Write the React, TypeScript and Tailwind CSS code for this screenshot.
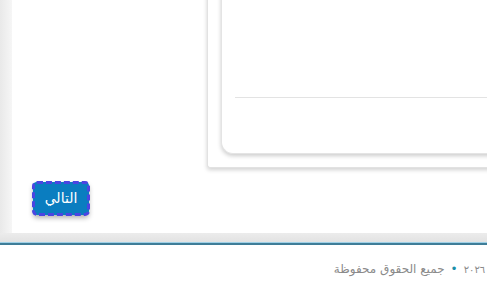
export default function App() {
  return (
    <div className="flex h-[291px] w-[487px] flex-col overflow-hidden bg-white font-['DejaVu_Sans',sans-serif]">
      <div className="flex h-[233px] shrink-0">
        <div className="w-[12px] shrink-0 bg-gradient-to-r from-[#e9e9e9] to-[#f6f6f6]" />
        <div className="flex min-w-0 flex-1 flex-col overflow-hidden bg-white">
          <div className="ml-[195px] mr-[-30px] mt-[-20px] shrink-0 rounded-bl-[3px] border-b border-l border-[#e2e2e2] bg-white pb-[13px] pl-[13px] shadow-[0_2px_4px_rgba(0,0,0,0.18)]">
            <div className="flex h-[174px] flex-col justify-end rounded-bl-[12px] border-b border-l border-[#e4e4e4] bg-white pb-[55px] pl-[13px] shadow-[0_2px_4px_rgba(0,0,0,0.2)]">
              <div className="h-px bg-[#e3e3e3]" />
            </div>
          </div>
          <div className="mt-[14px] pl-[21px]">
            <button
              type="button"
              dir="rtl"
              className="flex h-[33px] w-[56px] items-center justify-center rounded-[4px] bg-[#0a7dc0] text-[14px] text-white shadow-[0_3px_5px_rgba(0,0,0,0.3)] outline-[3px] outline-offset-[-2px] outline-dashed outline-[#4b45e2]"
            >
              التالي
            </button>
          </div>
        </div>
      </div>
      <div className="h-[9px] shrink-0 bg-gradient-to-b from-[#ececec] to-[#e2e2e2]" />
      <div className="h-[3px] shrink-0 border-t border-[#9fd0e6] bg-[#3f7d98]" />
      <div className="flex flex-1 justify-end pt-[15px] mr-[-14px]">
        <p dir="rtl" className="whitespace-nowrap text-[12px] text-[#8a8a8a]">
          © <span className="text-[10px]">٢٠٢٦</span>
          <span className="mx-[6px] text-[#1c8fa8]">•</span>جميع الحقوق محفوظة
        </p>
      </div>
    </div>
  );
}
